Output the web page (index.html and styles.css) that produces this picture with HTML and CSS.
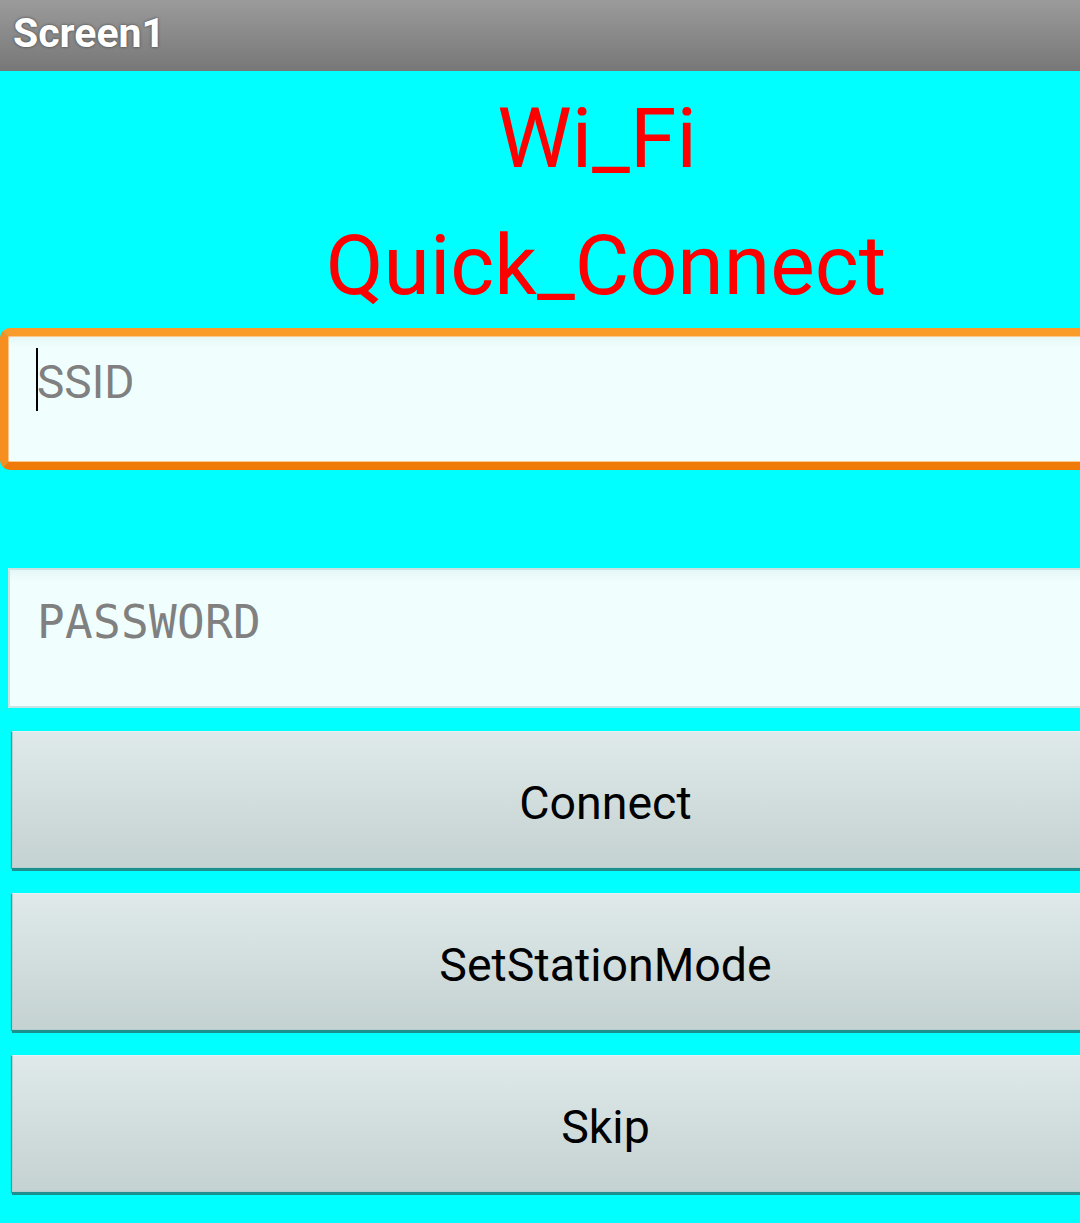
FILE: index.html
```html
<!DOCTYPE html>
<html>
<head>
<meta charset="utf-8">
<link rel="stylesheet" href="styles.css">
</head>
<body>
<div class="screen">
  <div class="titlebar">Screen1</div>
  <div class="title first">Wi_Fi</div>
  <div class="title second">Quick_Connect</div>
  <div class="field focused">
    <span class="caret"></span>
    <span class="hint sans">SSID</span>
  </div>
  <div class="field password">
    <span class="hint mono">PASSWORD</span>
  </div>
  <div class="btn first-btn">Connect</div>
  <div class="btn">SetStationMode</div>
  <div class="btn">Skip</div>
</div>
</body>
</html>
```
FILE: styles.css
```css
html, body {
  margin: 0;
  padding: 0;
  overflow: hidden;
  background: #00ffff;
}
.screen {
  width: 1080px;
  height: 1223px;
  overflow: hidden;
  background: #00ffff;
  font-family: Roboto, "Noto Sans", sans-serif;
}
.titlebar {
  height: 71px;
  box-sizing: border-box;
  line-height: 67px;
  padding-left: 13px;
  font-size: 41px;
  font-weight: bold;
  color: #ffffff;
  text-shadow: 0 0 3px rgba(0,0,0,0.55);
  background: linear-gradient(#9b9b9b, #777777);
}
.title {
  color: #ff0000;
  font-size: 84px;
  line-height: 98px;
  text-align: center;
  padding-left: 132px;
}
.title.first {
  margin-top: 19px;
  padding-left: 114px;
}
.title.second {
  margin-top: 29px;
}
.field {
  position: relative;
  box-sizing: border-box;
  background: linear-gradient(#e6f6f6, #f0fffe 12px, #f0fffe);
  font-size: 46px;
  line-height: 54px;
  color: #808080;
}
.sans {
  font-family: Roboto, sans-serif;
}
.field.focused {
  margin-top: 13px;
  height: 142px;
  border: 8px solid #f78a1a;
  border-right: none;
  border-top-color: #f99c2c;
  border-bottom-color: #ef7a08;
  border-left-color: #f68e20;
  border-radius: 10px 0 0 10px;
  box-shadow: inset 1px 1px 0 #fbc98d, inset 0 -1px 0 #fbc98d;
  padding: 19px 0 0 29px;
}
.caret {
  position: absolute;
  left: 28px;
  top: 12px;
  width: 1.5px;
  height: 63px;
  background: #000;
}
.field.password {
  margin: 98px 0 0 8px;
  height: 140px;
  border: 2px solid #c9e2e2;
  border-right: none;
  padding: 25px 0 0 27px;
}
.mono {
  font-family: "DejaVu Sans Mono", monospace;
  font-size: 46px;
  letter-spacing: 0.3px;
}
.btn {
  box-sizing: border-box;
  height: 137px;
  margin: 25px 0 0 12px;
  border: 1px solid #b5cdcd;
  border-right: none;
  border-top-color: #e6f0f0;
  background: linear-gradient(#dfe9e9, #c5d2d2);
  box-shadow: 0 3px 0 #1c8f8f, -1px 1px 1px #2aa8a8;
  display: flex;
  align-items: center;
  justify-content: center;
  padding: 6px 0 0 118px;
  font-size: 46.5px;
  color: #000;
}
.btn.first-btn {
  margin-top: 23px;
}
```
